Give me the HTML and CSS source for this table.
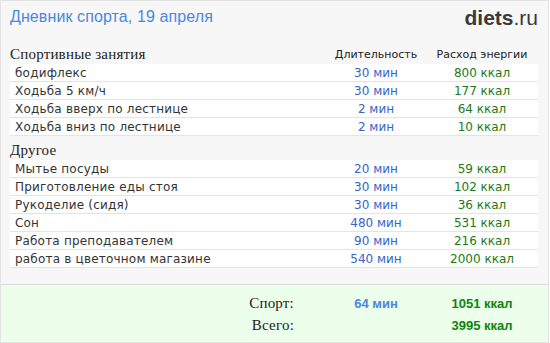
FILE: index.html
```html
<!DOCTYPE html>
<html lang="ru">
<head>
<meta charset="utf-8">
<title>Дневник спорта</title>
<link rel="stylesheet" href="styles.css">
</head>
<body>
<div class="card">
  <div class="top">
    <h1 class="title">Дневник спорта, 19 апреля</h1>
    <div class="logo"><b>diets</b>.ru</div>
  </div>
  <div class="table">
    <div class="sec-head">
      <span class="sec-name">Спортивные занятия</span>
      <span class="col">Длительность</span>
      <span class="col">Расход энергии</span>
    </div>
    <div class="row"><span class="name">бодифлекс</span><span class="dur">30 мин</span><span class="kcal">800 ккал</span></div>
    <div class="row"><span class="name">Ходьба 5 км/ч</span><span class="dur">30 мин</span><span class="kcal">177 ккал</span></div>
    <div class="row"><span class="name">Ходьба вверх по лестнице</span><span class="dur">2 мин</span><span class="kcal">64 ккал</span></div>
    <div class="row"><span class="name">Ходьба вниз по лестнице</span><span class="dur">2 мин</span><span class="kcal">10 ккал</span></div>
    <div class="sec-head second">
      <span class="sec-name">Другое</span>
    </div>
    <div class="row"><span class="name">Мытье посуды</span><span class="dur">20 мин</span><span class="kcal">59 ккал</span></div>
    <div class="row"><span class="name">Приготовление еды стоя</span><span class="dur">30 мин</span><span class="kcal">102 ккал</span></div>
    <div class="row"><span class="name">Рукоделие (сидя)</span><span class="dur">30 мин</span><span class="kcal">36 ккал</span></div>
    <div class="row"><span class="name">Сон</span><span class="dur">480 мин</span><span class="kcal">531 ккал</span></div>
    <div class="row"><span class="name">Работа преподавателем</span><span class="dur">90 мин</span><span class="kcal">216 ккал</span></div>
    <div class="row"><span class="name">работа в цветочном магазине</span><span class="dur">540 мин</span><span class="kcal">2000 ккал</span></div>
  </div>
  <div class="footer">
    <div class="sum">
      <span class="label">Спорт:</span><span class="tdur">64 мин</span><span class="tkcal">1051 ккал</span>
    </div>
    <div class="sum">
      <span class="label">Всего:</span><span class="tdur"></span><span class="tkcal">3995 ккал</span>
    </div>
  </div>
</div>
</body>
</html>
```

FILE: styles.css
```css
html, body {
  margin: 0;
  padding: 0;
  background: #ffffff;
}

.card {
  width: 549px;
  height: 343px;
  box-sizing: border-box;
  border: 1px solid #e3e3e3;
  background: #f7f7f7;
  display: flex;
  flex-direction: column;
}

.top {
  height: 38px;
  padding: 6px 10px 0 9px;
  display: flex;
  justify-content: space-between;
  align-items: flex-start;
}

.title {
  margin: 0;
  font-family: "Liberation Sans", Arial, sans-serif;
  font-weight: normal;
  font-size: 16px;
  line-height: 20px;
  letter-spacing: 0.1px;
  color: #4a87e0;
}

.logo {
  font-family: "Liberation Sans", Arial, sans-serif;
  font-size: 21px;
  line-height: 22px;
  color: #3a3a3a;
}

.logo b {
  font-weight: bold;
}

.table {
  padding: 0 10px 0 9px;
  display: flex;
  flex-direction: column;
}

.sec-head {
  display: grid;
  grid-template-columns: 1fr 100px 112px;
  height: 19px;
  align-items: center;
}

.sec-head.second {
  height: 20px;
  padding-top: 4px;
}

.sec-name {
  font-family: "Liberation Serif", "Times New Roman", serif;
  font-size: 15px;
  letter-spacing: 0.2px;
  color: #222;
}

.col {
  font-family: "DejaVu Sans", Verdana, sans-serif;
  font-size: 11px;
  color: #222;
  text-align: center;
}

.row {
  display: grid;
  grid-template-columns: 1fr 100px 112px;
  height: 17px;
  align-items: center;
  background: #ffffff;
  border-bottom: 1px solid #e4e4e4;
  font-family: "DejaVu Sans", Verdana, sans-serif;
  font-size: 12px;
}

.name {
  padding-left: 5px;
  letter-spacing: 0.2px;
  color: #333;
}

.dur {
  text-align: center;
  color: #3565c8;
}

.kcal {
  text-align: center;
  color: #1a7a1a;
}

.footer {
  margin-top: 16px;
  flex: 1;
  border-top: 1px solid #dcdcdc;
  background: #ebffeb;
  padding: 7px 10px 0 9px;
}

.sum {
  display: grid;
  grid-template-columns: 1fr 100px 112px;
  height: 22px;
  align-items: center;
}

.label {
  text-align: right;
  padding-right: 32px;
  font-family: "Liberation Serif", "Times New Roman", serif;
  font-size: 15px;
  letter-spacing: 0.2px;
  color: #222;
}

.tdur {
  text-align: center;
  font-family: "Liberation Sans", Arial, sans-serif;
  font-weight: bold;
  font-size: 13px;
  color: #4a86e0;
}

.tkcal {
  text-align: center;
  font-family: "Liberation Sans", Arial, sans-serif;
  font-weight: bold;
  font-size: 13px;
  color: #0d850d;
}
```
